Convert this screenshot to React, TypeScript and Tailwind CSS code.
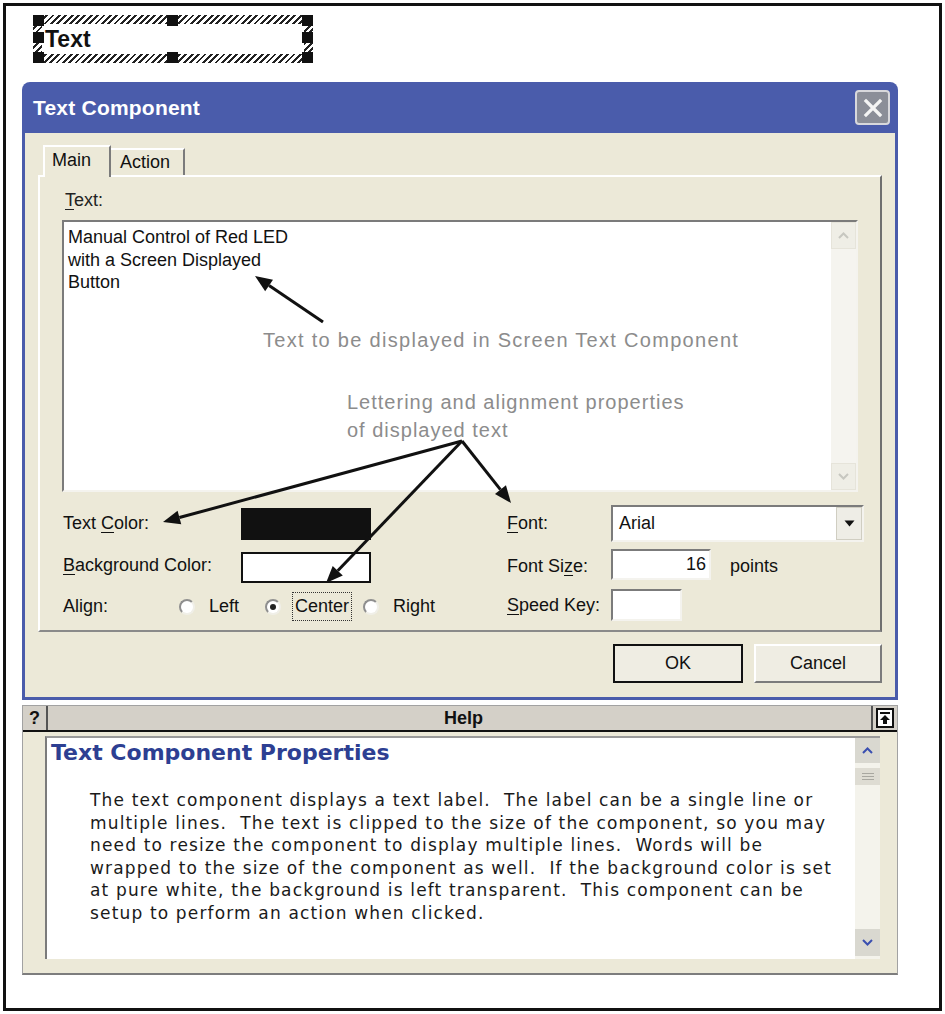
import React from 'react';

const ui = "font-['Liberation_Sans',Arial,sans-serif]";
const help = "font-['DejaVu_Sans',Verdana,sans-serif]";

const inset = 'border-2 border-t-[#7b7b7b] border-l-[#7b7b7b] border-r-[#f4f3ee] border-b-[#f4f3ee] bg-white';

const helpText = `The text component displays a text label.  The label can be a single line or
multiple lines.  The text is clipped to the size of the component, so you may
need to resize the component to display multiple lines.  Words will be
wrapped to the size of the component as well.  If the background color is set
at pure white, the background is left transparent.  This component can be
setup to perform an action when clicked.`;

type ArrowProps = { x1: number; y1: number; x2: number; y2: number };

const Arrow = ({ x1, y1, x2, y2 }: ArrowProps) => {
  const a = Math.atan2(y2 - y1, x2 - x1);
  const len = 17;
  const w = 7;
  const bx = x2 - len * Math.cos(a);
  const by = y2 - len * Math.sin(a);
  const px = -Math.sin(a) * w;
  const py = Math.cos(a) * w;
  return (
    <g>
      <line x1={x1} y1={y1} x2={bx} y2={by} stroke="#111" strokeWidth={3} />
      <polygon points={`${x2},${y2} ${bx + px},${by + py} ${bx - px},${by - py}`} fill="#111" />
    </g>
  );
};

const U = ({ children }: { children: React.ReactNode }) => (
  <span className="underline underline-offset-[3px] decoration-1">{children}</span>
);

const Radio = ({ checked }: { checked?: boolean }) => (
  <span className="flex h-[16px] w-[16px] items-center justify-center rounded-full border-2 border-t-[#8f8f8f] border-l-[#8f8f8f] border-r-[#f0efe8] border-b-[#f0efe8] bg-white">
    {checked && <span className="h-[6px] w-[6px] rounded-full bg-[#222]" />}
  </span>
);

const Handle = ({ cls }: { cls: string }) => <div className={`absolute h-[11px] w-[11px] bg-[#111] ${cls}`} />;

const App = () => {
  return (
    <div className={`relative h-[1014px] w-[945px] bg-white p-[3px] ${ui}`}>
      <div className="flex h-full flex-col border-[3px] border-[#111] bg-white">
        {/* selected text component on the canvas */}
        <div className="relative ml-[27px] mt-[9px] h-[48px] w-[280px] bg-[repeating-linear-gradient(135deg,#222_0px,#222_2px,#fff_2px,#fff_4.5px)] p-[9px]">
          <div className="flex h-full items-center bg-white pl-[3px] pt-[1px]">
            <span className="text-[23px] font-bold leading-none text-[#111]">Text</span>
          </div>
          <Handle cls="left-0 top-0" />
          <Handle cls="left-[134px] top-0" />
          <Handle cls="left-[269px] top-0" />
          <Handle cls="left-0 top-[17px]" />
          <Handle cls="left-[269px] top-[17px]" />
          <Handle cls="left-0 top-[37px]" />
          <Handle cls="left-[134px] top-[37px]" />
          <Handle cls="left-[269px] top-[37px]" />
        </div>

        {/* dialog */}
        <div className="ml-[16px] mt-[19px] w-[876px] rounded-t-[8px] bg-[#4a5cab] px-[3px] pb-[3px]">
          <div className="flex h-[51px] items-center justify-between pl-[8px] pr-[5px]">
            <span className="text-[21px] font-bold tracking-[0.01em] text-white">Text Component</span>
            <div className="flex h-[35px] w-[35px] items-center justify-center rounded-[4px] border-2 border-[#d8d8dc] bg-[#8b8e98]">
              <svg width="20" height="20" viewBox="0 0 20 20">
                <path d="M3 3 L17 17 M17 3 L3 17" stroke="#f4f4f4" strokeWidth="3.2" strokeLinecap="square" />
              </svg>
            </div>
          </div>

          <div className="flex h-[564px] flex-col bg-[#ece9d8] px-[13px] pt-[12px]">
            {/* tabs */}
            <div className="flex h-[30px] items-end pl-[5px]">
              <div className="relative z-10 -mb-[2px] flex h-[32px] w-[68px] items-center border-l-2 border-t-2 border-r-2 border-l-white border-t-white border-r-[#7b7b7b] bg-[#ece9d8] pl-[7px] pb-[3px] text-[18px] text-[#111]">
                Main
              </div>
              <div className="flex h-[27px] w-[74px] items-center border-t-2 border-r-2 border-t-white border-r-[#7b7b7b] pl-[9px] text-[18px] text-[#111]">
                Action
              </div>
            </div>

            {/* tab panel */}
            <div className="flex h-[457px] flex-col border-2 border-l-white border-t-white border-r-[#6f6f6f] border-b-[#8a8a8a] px-[22px] pt-[12px]">
              <div className="h-[22px] pl-[3px] text-[18px] leading-[22px] text-[#222]">
                <U>T</U>ext:
              </div>
              <div className={`mt-[9px] flex h-[272px] ${inset}`}>
                <div className="flex-1 px-[4px] pt-[4px] text-[18px] leading-[22.5px] text-[#111]">
                  Manual Control of Red LED
                  <br />
                  with a Screen Displayed
                  <br />
                  Button
                </div>
                <div className="flex w-[25px] flex-col justify-between bg-[#f5f4ef]">
                  <div className="flex h-[27px] items-center justify-center border border-[#e6e4da] bg-[#efeee6]">
                    <svg width="11" height="7" viewBox="0 0 11 7">
                      <path d="M1 6 L5.5 1.5 L10 6" fill="none" stroke="#c7c7c0" strokeWidth="2" />
                    </svg>
                  </div>
                  <div className="flex h-[27px] items-center justify-center border border-[#e6e4da] bg-[#efeee6]">
                    <svg width="11" height="7" viewBox="0 0 11 7">
                      <path d="M1 1 L5.5 5.5 L10 1" fill="none" stroke="#c7c7c0" strokeWidth="2" />
                    </svg>
                  </div>
                </div>
              </div>

              {/* properties */}
              <div className="mt-[13px] grid grid-cols-[178px_266px_104px_253px] grid-rows-[37px_34px_33px] gap-y-[6.5px] pl-[1px] text-[18px] text-[#111]">
                <div className="flex items-center">
                  <span>
                    Text <U>C</U>olor:
                  </span>
                </div>
                <div className="flex items-center">
                  <div className="h-[32px] w-[130px] bg-[#111]" />
                </div>
                <div className="flex items-center">
                  <span>
                    <U>F</U>ont:
                  </span>
                </div>
                <div className={`flex items-center ${inset} pl-[6px]`}>
                  <span className="flex-1">Arial</span>
                  <div className="flex h-full w-[26px] items-center justify-center border border-[#d0cec2] bg-[#eeede6]">
                    <svg width="11" height="7" viewBox="0 0 11 7">
                      <path d="M0.5 0.5 L10.5 0.5 L5.5 6.5 Z" fill="#111" />
                    </svg>
                  </div>
                </div>

                <div className="flex items-center">
                  <span>
                    <U>B</U>ackground Color:
                  </span>
                </div>
                <div className="flex items-center pt-[3px]">
                  <div className="h-[31px] w-[130px] border-2 border-[#111] bg-white" />
                </div>
                <div className="flex items-center pt-[1px]">
                  <span>
                    Font Si<U>z</U>e:
                  </span>
                </div>
                <div className="flex items-start">
                  <div className={`flex h-[31px] w-[100px] items-center justify-end pr-[3px] ${inset}`}>16</div>
                  <span className="ml-[19px] self-center pt-[1px]">points</span>
                </div>

                <div className="col-span-2 flex items-center pt-[2px]">
                  <span className="w-[116px]">Align:</span>
                  <Radio />
                  <span className="ml-[14px]">Left</span>
                  <span className="ml-[26px]">
                    <Radio checked />
                  </span>
                  <span className="ml-[11px] border border-dotted border-[#333] px-[2px] leading-[27px]">Center</span>
                  <span className="ml-[11px]">
                    <Radio />
                  </span>
                  <span className="ml-[14px]">Right</span>
                </div>
                <div className="flex items-center">
                  <span>
                    <U>S</U>peed Key:
                  </span>
                </div>
                <div className="flex items-start">
                  <div className={`h-[32px] w-[71px] ${inset}`} />
                </div>
              </div>
            </div>

            {/* buttons */}
            <div className="mt-[12px] flex justify-end gap-[11px] text-[18px] text-[#111]">
              <button className="flex h-[39px] w-[130px] items-center justify-center border-2 border-[#111] bg-[#efede3]">
                OK
              </button>
              <button className="flex h-[39px] w-[128px] items-center justify-center border-2 border-l-white border-t-white border-r-[#7b7b7b] border-b-[#7b7b7b] bg-[#efede3]">
                Cancel
              </button>
            </div>
          </div>
        </div>

        {/* help panel */}
        <div className="ml-[16px] mt-[5px] flex h-[270px] w-[876px] flex-col border border-b-2 border-[#a2a2a2] border-b-[#7d7d7d] bg-[#ece9d8]">
          <div className="flex h-[26px] border-b-2 border-[#111] bg-[#d4d0c8] text-[18px] font-bold text-[#111]">
            <div className="flex w-[25px] items-center justify-center border-r-2 border-r-[#555]">?</div>
            <div className="flex flex-1 items-center justify-center pl-[8px]">Help</div>
            <div className="flex w-[26px] items-center justify-center border-l-2 border-l-[#555]">
              <svg width="18" height="20" viewBox="0 0 18 20">
                <rect x="1" y="1" width="16" height="18" fill="#fff" stroke="#111" strokeWidth="2" />
                <rect x="4" y="4" width="10" height="2" fill="#111" />
                <path d="M9 7 L14 12 L11 12 L11 16 L7 16 L7 12 L4 12 Z" fill="#111" />
              </svg>
            </div>
          </div>
          <div className="ml-[22px] mr-[17px] mt-[4px] flex h-[223px] border-l-2 border-t-2 border-l-[#7b7b7b] border-t-[#9a9a9a] bg-white">
            <div className={`flex-1 pl-[4px] pt-[1px] ${help}`}>
              <div className="text-[22px] font-bold leading-[28px] text-[#2d3f92]">Text Component Properties</div>
              <div className="mt-[22px] whitespace-pre pl-[39px] text-[17px] leading-[22.6px] tracking-[0.068em] text-[#1a1a1a]">
                {helpText}
              </div>
            </div>
            <div className="flex w-[25px] flex-col bg-[#f4f3ec] pb-[3px]">
              <div className="flex h-[25px] items-center justify-center bg-[#d9d8d0]">
                <svg width="11" height="7" viewBox="0 0 11 7">
                  <path d="M1 6 L5.5 1.5 L10 6" fill="none" stroke="#3a4fb0" strokeWidth="2" />
                </svg>
              </div>
              <div className="mt-[5px] flex h-[17px] flex-col items-center justify-center gap-[2px] bg-[#dedcd3]">
                <div className="h-px w-[12px] bg-[#a8a7a0]" />
                <div className="h-px w-[12px] bg-[#a8a7a0]" />
                <div className="h-px w-[12px] bg-[#a8a7a0]" />
              </div>
              <div className="flex-1" />
              <div className="flex h-[27px] items-center justify-center bg-[#d9d8d0]">
                <svg width="11" height="7" viewBox="0 0 11 7">
                  <path d="M1 1 L5.5 5.5 L10 1" fill="none" stroke="#3a4fb0" strokeWidth="2" />
                </svg>
              </div>
            </div>
          </div>
        </div>
      </div>

      {/* annotations laid over the screenshot */}
      <div className="pointer-events-none absolute left-[263px] top-[328px] text-[20px] leading-[24px] tracking-[0.065em] text-[#8c8c8c]">
        Text to be displayed in Screen Text Component
      </div>
      <div className="pointer-events-none absolute left-[347px] top-[388px] text-[20px] leading-[28px] tracking-[0.05em] text-[#8c8c8c]">
        Lettering and alignment properties
        <br />
        of displayed text
      </div>
      <svg className="pointer-events-none absolute left-0 top-0" width="945" height="1014">
        <Arrow x1={323} y1={322} x2={255} y2={276} />
        <Arrow x1={462} y1={441} x2={163} y2={522} />
        <Arrow x1={462} y1={441} x2={326} y2={583} />
        <Arrow x1={462} y1={441} x2={511} y2={503} />
      </svg>
    </div>
  );
};

export default App;
